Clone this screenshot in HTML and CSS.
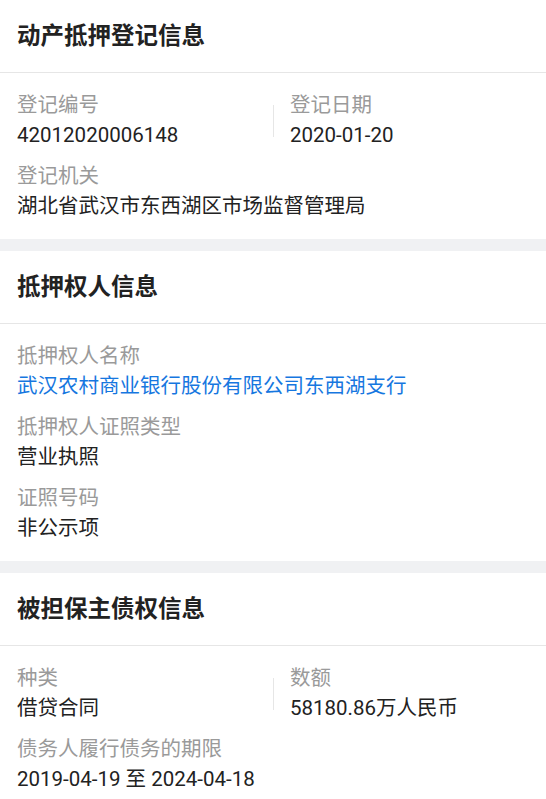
FILE: index.html
```html
<!DOCTYPE html>
<html lang="zh-CN">
<head>
    <meta charset="UTF-8">
    <meta name="viewport" content="width=device-width, initial-scale=1.0">
    <title>动产抵押登记信息</title>
    <link rel="stylesheet" href="styles.css">
</head>
<body>

<div class="section">
    <div class="section-title">动产抵押登记信息</div>
    <div class="section-body">
        <div class="pair-row">
            <div class="item">
                <div class="label">登记编号</div>
                <div class="value">42012020006148</div>
            </div>
            <div class="col-line"></div>
            <div class="item item-right">
                <div class="label">登记日期</div>
                <div class="value">2020-01-20</div>
            </div>
        </div>
        <div class="item">
            <div class="label">登记机关</div>
            <div class="value">湖北省武汉市东西湖区市场监督管理局</div>
        </div>
    </div>
</div>

<div class="section">
    <div class="section-title">抵押权人信息</div>
    <div class="section-body">
        <div class="item">
            <div class="label">抵押权人名称</div>
            <div class="value link">武汉农村商业银行股份有限公司东西湖支行</div>
        </div>
        <div class="item">
            <div class="label">抵押权人证照类型</div>
            <div class="value">营业执照</div>
        </div>
        <div class="item">
            <div class="label">证照号码</div>
            <div class="value">非公示项</div>
        </div>
    </div>
</div>

<div class="section">
    <div class="section-title">被担保主债权信息</div>
    <div class="section-body">
        <div class="pair-row">
            <div class="item">
                <div class="label">种类</div>
                <div class="value">借贷合同</div>
            </div>
            <div class="col-line"></div>
            <div class="item item-right">
                <div class="label">数额</div>
                <div class="value">58180.86万人民币</div>
            </div>
        </div>
        <div class="item">
            <div class="label">债务人履行债务的期限</div>
            <div class="value">2019-04-19 至 2024-04-18</div>
        </div>
    </div>
</div>

</body>
</html>
```

FILE: styles.css
```css
body {
    margin: 0;
    background-color: #f0f1f3;
    font-family: Roboto, "Noto Sans CJK SC", sans-serif;
}
.section {
    background-color: #fff;
    margin-bottom: 12px;
}
.section-title {
    height: 72px;
    line-height: 72px;
    padding: 0 17px;
    font-size: 23.5px;
    font-weight: bold;
    color: #222;
    border-bottom: 1px solid #e6e6e6;
}
.section-body {
    padding: 18px 17px 18px;
    display: flex;
    flex-direction: column;
    gap: 12px;
}
.pair-row {
    display: grid;
    grid-template-columns: 256px 1px 1fr;
    align-items: center;
}
.col-line {
    height: 32px;
    background-color: #e6e6e6;
}
.item-right {
    padding-left: 16px;
}
.label {
    font-size: 20.5px;
    line-height: 29.5px;
    color: #9a9a9a;
}
.value {
    font-size: 20.5px;
    line-height: 29.5px;
    color: #222;
}
.link {
    color: #1677e0;
}
```
